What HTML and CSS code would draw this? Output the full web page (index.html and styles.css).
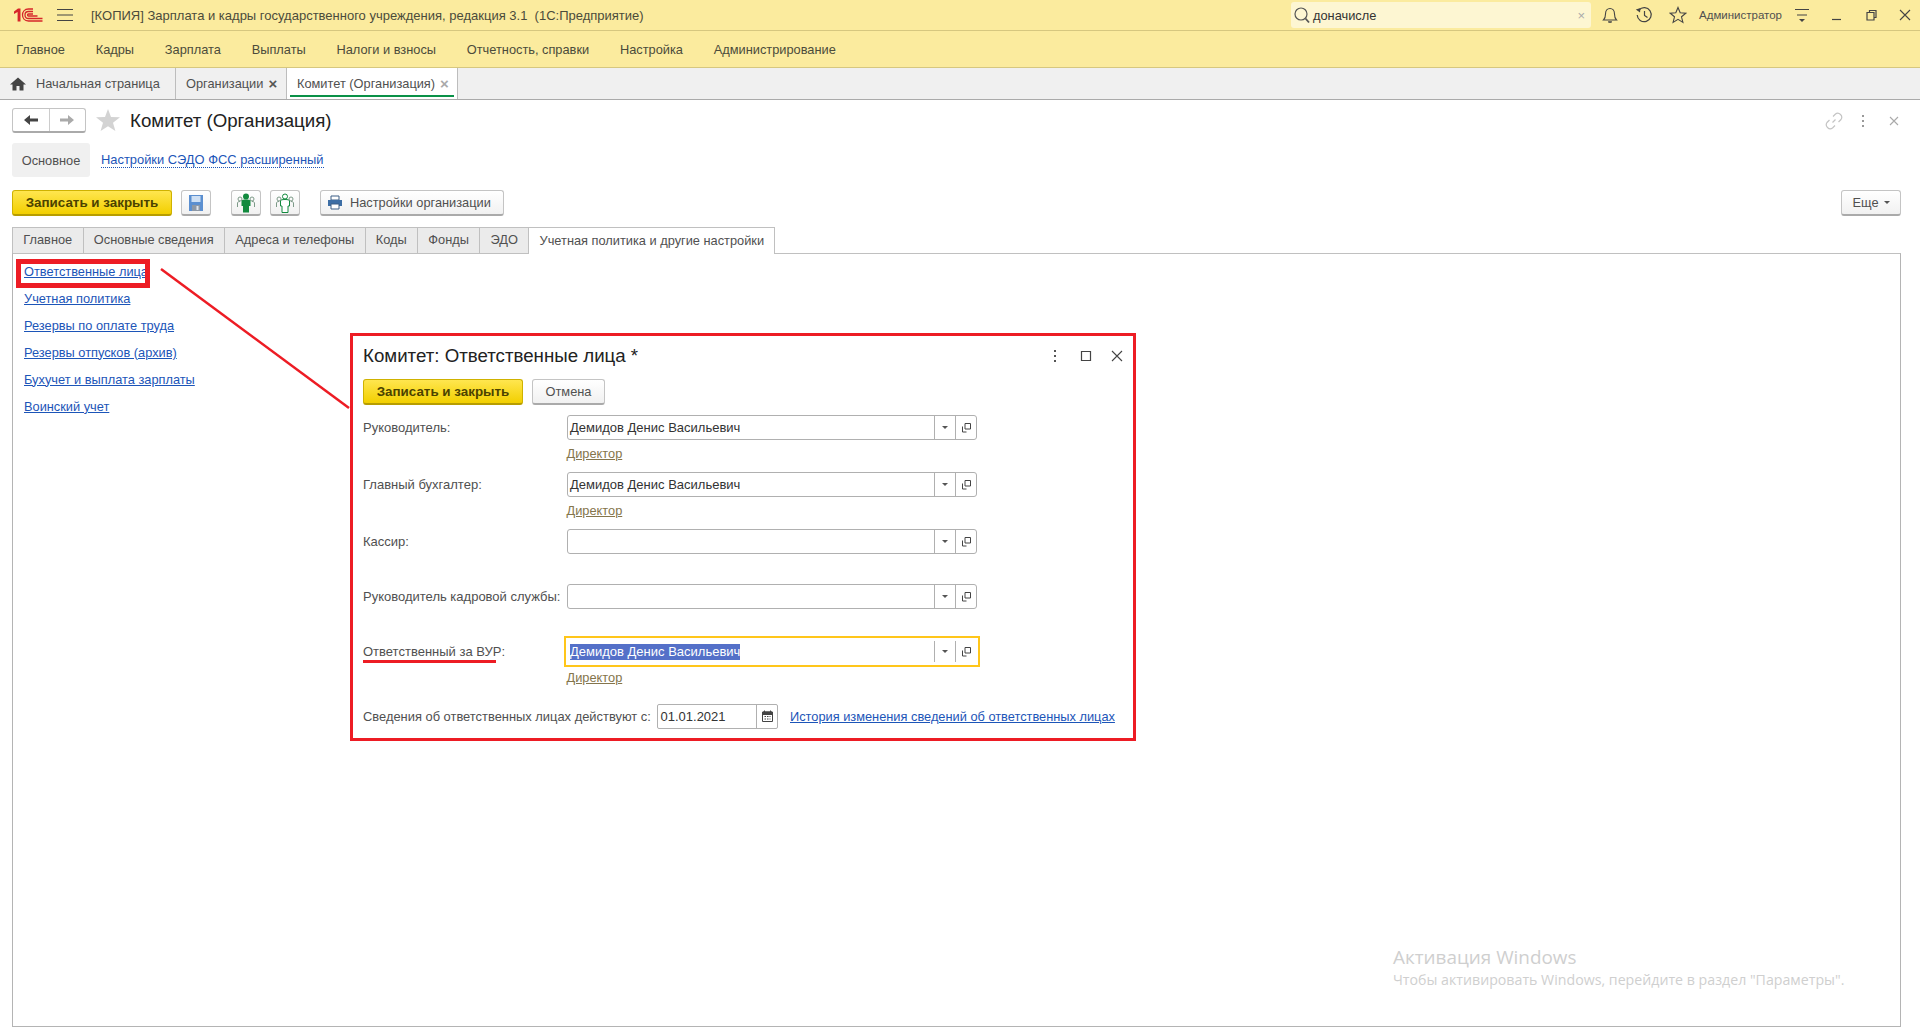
FILE: index.html
```html
<!DOCTYPE html>
<html lang="ru">
<head>
    <meta charset="UTF-8">
    <title>Комитет (Организация)</title>
    <link rel="stylesheet" href="styles.css">
</head>
<body>
<div class="titlebar">
    <svg class="logo" width="30" height="14" viewBox="0 0 30 14">
        <path d="M1 3.500 5 .5H7.500V13.500H4.600V4L1 6Z" fill="#d6262a"/>
        <g fill="none" stroke="#d6262a" stroke-width="1.300">
            <path d="M29.500 13H15.500C11.500 13 9.500 10 9.500 7S11.500 1 15.500 1H20"/>
            <path d="M29.500 10.500H15.500C13.500 10.500 12 9 12 7S13.500 3.500 15.500 3.500H20"/>
            <path d="M24.500 8H15.500C15 8 14.500 7.500 14.500 7S15 6 15.500 6H20"/>
        </g>
    </svg>
    <svg class="burger" width="18" height="14" viewBox="0 0 18 14"><path d="M1 1.500H17M1 7H17M1 12.500H17" stroke="#444" stroke-width="1.200"/></svg>
    <div class="app-title">[КОПИЯ] Зарплата и кадры государственного учреждения, редакция 3.1&nbsp; (1С:Предприятие)</div>
    <div class="search">
        <svg width="18" height="18" viewBox="0 0 18 18"><circle cx="8" cy="8" r="6" fill="none" stroke="#555" stroke-width="1.200"/><path d="M12.500 12.500 16 16.500" stroke="#555" stroke-width="1.800"/></svg>
        <span class="search-text">доначисле</span>
        <span class="search-clear">×</span>
    </div>
    <svg class="top-icon bell" width="18" height="18" viewBox="0 0 18 18"><path d="M2.500 14H15.500C14 12.500 13.500 11 13.500 8C13.500 4.500 11.500 2.500 9 2.500S4.500 4.500 4.500 8C4.500 11 4 12.500 2.500 14ZM7 16H11" fill="none" stroke="#444" stroke-width="1.100"/><path d="M7 15.500H11L9 17Z" fill="#444"/></svg>
    <svg class="top-icon" width="18" height="18" viewBox="0 0 18 18"><path d="M4 4A7 7 0 1 1 2.200 9" fill="none" stroke="#444" stroke-width="1.200"/><path d="M9.500 5V9.500L12.500 11.500" fill="none" stroke="#444" stroke-width="1.200"/><path d="M.8 3.500 5.500 2 5 6.500Z" fill="#444"/></svg>
    <svg class="top-icon" width="18" height="18" viewBox="0 0 18 18"><path d="M9 1.500 11.200 6.800 16.800 7.200 12.500 10.800 13.900 16.400 9 13.400 4.100 16.400 5.500 10.800 1.200 7.200 6.800 6.800Z" fill="none" stroke="#444" stroke-width="1.100"/></svg>
    <span class="user">Администратор</span>
    <svg class="user-menu" width="18" height="16" viewBox="0 0 18 16"><path d="M2 2.500H16M4 8H14" stroke="#444" stroke-width="1.100"/><path d="M6 12H12L9 15Z" fill="#444"/></svg>
    <svg class="win-btn win-min" width="14" height="14" viewBox="0 0 14 14"><path d="M2 11.500H11" stroke="#444" stroke-width="1.200"/></svg>
    <svg class="win-btn" width="14" height="14" viewBox="0 0 14 14"><path d="M5.500 4.500V2.500H12V9.500H10.500M3 4.500H10V12H3Z" fill="none" stroke="#444" stroke-width="1.200"/></svg>
    <svg class="win-btn" width="14" height="14" viewBox="0 0 14 14"><path d="M2 2 12 12M12 2 2 12" stroke="#444" stroke-width="1.100"/></svg>
</div>

<nav class="mainmenu">
    <a>Главное</a>
    <a>Кадры</a>
    <a>Зарплата</a>
    <a>Выплаты</a>
    <a>Налоги и взносы</a>
    <a>Отчетность, справки</a>
    <a>Настройка</a>
    <a>Администрирование</a>
</nav>

<div class="opened">
    <div class="opened-tab home-tab">
        <svg width="16" height="14" viewBox="0 0 16 14"><path d="M8 .5 16 7.500H13.500V13.500H9.500V9H6.500V13.500H2.500V7.500H0Z" fill="#444"/></svg>
        Начальная страница
    </div>
    <div class="opened-tab org-tab">Организации <span class="tab-x">×</span></div>
    <div class="opened-tab current-tab">Комитет (Организация) <span class="tab-x light">×</span></div>
</div>

<main class="page">
    <div class="page-head">
        <div class="nav-btns">
            <span class="nav-btn"><svg width="16" height="12" viewBox="0 0 16 12"><path d="M1 6 7 1V4.500H15V7.500H7V11Z" fill="#444"/></svg></span>
            <span class="nav-btn"><svg width="16" height="12" viewBox="0 0 16 12"><path d="M15 6 9 1V4.500H1V7.500H9V11Z" fill="#aaa"/></svg></span>
        </div>
        <svg class="fav" width="24" height="22" viewBox="0 0 24 22"><path d="M12 0 15 8 24 8.300 17 13.800 19.400 22 12 17.300 4.600 22 7 13.800 0 8.300 9 8Z" fill="#d3d3d3"/></svg>
        <h1>Комитет (Организация)</h1>
        <div class="page-icons">
            <svg width="18" height="18" viewBox="0 0 18 18"><path d="M7.500 10.500 10.500 7.500M8 4.500 10.500 2C12 .8 14 1 15.500 2.500S17 6 16 7.500L13.500 10M10 13.500 7.500 16C6 17.200 4 17 2.500 15.500S1 12 2 10.500L4.500 8" fill="none" stroke="#c4c4c4" stroke-width="1.200"/></svg>
            <svg class="dots" width="4" height="14" viewBox="0 0 4 14"><path d="M2 1V3M2 6V8M2 11V13" stroke="#999" stroke-width="2"/></svg>
            <svg width="10" height="10" viewBox="0 0 10 10"><path d="M1 1 9 9M9 1 1 9" stroke="#aaa" stroke-width="1.100"/></svg>
        </div>
    </div>

    <div class="sections">
        <span class="section-main">Основное</span>
        <a class="section-link">Настройки СЭДО ФСС расширенный</a>
    </div>

    <div class="toolbar">
        <button class="btn btn-primary">Записать и закрыть</button>
        <button class="btn btn-icon save-btn">
            <svg width="16" height="18" viewBox="0 0 16 18"><path d="M1 1H15V17H1Z" fill="#5b8fd0"/><path d="M3.500 2H12.500V8H3.500Z" fill="#cfe0f4"/><path d="M4 11H12V17H4Z" fill="#8d98a6"/><path d="M8.500 12H10.500V16H8.500Z" fill="#dfe5ec"/></svg>
        </button>
        <button class="btn btn-icon people-btn">
            <svg width="20" height="20" viewBox="0 0 20 20"><g fill="none" stroke="#7d9a88"><circle cx="4" cy="6" r="2"/><circle cx="16" cy="6" r="2"/><path d="M1.500 14V10C1.500 9 2.500 8.500 4 8.500M18.500 14V10C18.500 9 17.500 8.500 16 8.500"/></g><circle cx="10" cy="3.500" r="3" fill="#128a3e"/><path d="M5.500 8C5.500 7 7 6.500 10 6.500S14.500 7 14.500 8V13H13V19.500H7V13H5.500Z" fill="#128a3e"/></svg>
        </button>
        <button class="btn btn-icon people-btn2">
            <svg width="20" height="20" viewBox="0 0 20 20"><g fill="none" stroke="#7d9a88"><circle cx="4" cy="6" r="2"/><circle cx="16" cy="6" r="2"/><path d="M1.500 14V10C1.500 9 2.500 8.500 4 8.500M18.500 14V10C18.500 9 17.500 8.500 16 8.500"/></g><g fill="#fff" stroke="#128a3e"><circle cx="10" cy="3.500" r="2.500"/><path d="M5.500 8C5.500 7 7 6.500 10 6.500S14.500 7 14.500 8V13H13V19.500H7V13H5.500Z"/></g></svg>
        </button>
        <button class="btn settings-btn">
            <svg width="16" height="15" viewBox="0 0 16 15"><path d="M4 1H12V5H4Z" fill="#fff" stroke="#3d5f86"/><path d="M1 5H15V11H1Z" fill="#3d6ea5"/><path d="M4 9H12V14H4Z" fill="#fff" stroke="#3d5f86"/></svg>
            Настройки организации
        </button>
        <button class="btn more-btn">Еще <i class="caret"></i></button>
    </div>

    <div class="tabs">
        <div class="tab">Главное</div>
        <div class="tab">Основные сведения</div>
        <div class="tab">Адреса и телефоны</div>
        <div class="tab">Коды</div>
        <div class="tab">Фонды</div>
        <div class="tab">ЭДО</div>
        <div class="tab active">Учетная политика и другие настройки</div>
    </div>
    <div class="tab-body">
        <a class="side-link">Ответственные лица</a>
        <a class="side-link">Учетная политика</a>
        <a class="side-link">Резервы по оплате труда</a>
        <a class="side-link">Резервы отпусков (архив)</a>
        <a class="side-link">Бухучет и выплата зарплаты</a>
        <a class="side-link">Воинский учет</a>
    </div>
</main>

<div class="red-box"></div>
<svg class="red-line" width="200" height="150" viewBox="0 0 200 150"><path d="M1 1 189 140" stroke="#ed1c24" stroke-width="2.500"/></svg>

<section class="dialog">
    <div class="dialog-head">
        <h2>Комитет: Ответственные лица *</h2>
        <svg width="4" height="14" viewBox="0 0 4 14"><path d="M2 1V3M2 6V8M2 11V13" stroke="#555" stroke-width="2"/></svg>
        <svg class="dlg-max" width="12" height="12" viewBox="0 0 12 12"><path d="M1.500 1.500H10.500V10.500H1.500Z" fill="none" stroke="#444" stroke-width="1.200"/></svg>
        <svg class="dlg-close" width="12" height="12" viewBox="0 0 12 12"><path d="M1 1 11 11M11 1 1 11" stroke="#444" stroke-width="1.100"/></svg>
    </div>
    <div class="dialog-actions">
        <button class="btn btn-primary">Записать и закрыть</button>
        <button class="btn cancel-btn">Отмена</button>
    </div>

    <div class="form-row">
        <label>Руководитель:</label>
        <div class="field"><span class="field-value">Демидов Денис Васильевич</span><span class="field-btn"><i class="caret"></i></span><span class="field-btn"><svg width="10" height="10" viewBox="0 0 10 10"><path d="M4 .5H9.500V6H4ZM1.500 3.500V9H5.500" fill="none" stroke="#444"/></svg></span></div>
    </div>
    <div class="hint"><a>Директор</a></div>

    <div class="form-row">
        <label>Главный бухгалтер:</label>
        <div class="field"><span class="field-value">Демидов Денис Васильевич</span><span class="field-btn"><i class="caret"></i></span><span class="field-btn"><svg width="10" height="10" viewBox="0 0 10 10"><path d="M4 .5H9.500V6H4ZM1.500 3.500V9H5.500" fill="none" stroke="#444"/></svg></span></div>
    </div>
    <div class="hint"><a>Директор</a></div>

    <div class="form-row row-gap">
        <label>Кассир:</label>
        <div class="field"><span class="field-value"></span><span class="field-btn"><i class="caret"></i></span><span class="field-btn"><svg width="10" height="10" viewBox="0 0 10 10"><path d="M4 .5H9.500V6H4ZM1.500 3.500V9H5.500" fill="none" stroke="#444"/></svg></span></div>
    </div>

    <div class="form-row row-gap">
        <label>Руководитель кадровой службы:</label>
        <div class="field"><span class="field-value"></span><span class="field-btn"><i class="caret"></i></span><span class="field-btn"><svg width="10" height="10" viewBox="0 0 10 10"><path d="M4 .5H9.500V6H4ZM1.500 3.500V9H5.500" fill="none" stroke="#444"/></svg></span></div>
    </div>

    <div class="form-row">
        <label><span class="marked">Ответственный за ВУР</span>:</label>
        <div class="field focused"><span class="field-value"><span class="selected">Демидов Денис Васильевич</span></span><span class="field-btn"><i class="caret"></i></span><span class="field-btn"><svg width="10" height="10" viewBox="0 0 10 10"><path d="M4 .5H9.500V6H4ZM1.500 3.500V9H5.500" fill="none" stroke="#444"/></svg></span></div>
    </div>
    <div class="hint hint-last"><a>Директор</a></div>

    <div class="date-row">
        <label>Сведения об ответственных лицах действуют с:</label>
        <div class="field date-field"><span class="field-value">01.01.2021</span><span class="field-btn"><svg width="11" height="12" viewBox="0 0 11 12"><path d="M.5 2H10.500V11.500H.5Z" fill="none" stroke="#444"/><path d="M1 2H10V4.500H1ZM2.500 .5V2M8.500 .5V2" fill="#444" stroke="#444"/><path d="M2.500 6.500H8.500M2.500 9H8.500" stroke="#444" stroke-dasharray="1.500 1"/></svg></span></div>
        <a class="history">История изменения сведений об ответственных лицах</a>
    </div>
</section>

<div class="activation">
    <div class="activation-title">Активация Windows</div>
    <div class="activation-text">Чтобы активировать Windows, перейдите в раздел "Параметры".</div>
</div>
</body>
</html>
```

FILE: styles.css
```css
* {
    margin: 0;
    padding: 0;
    box-sizing: border-box;
}
html, body {
    height: 1034px;
    overflow: hidden;
}
body {
    display: flex;
    flex-direction: column;
    position: relative;
    font-family: "Liberation Sans", Arial, sans-serif;
    font-size: 12.800px;
    color: #505050;
    background: #fff;
}
svg {
    display: block;
    flex: none;
}

/* top bars */
.titlebar {
    display: flex;
    align-items: center;
    height: 31px;
    padding-right: 8px;
    background: #fbeb9e;
    border-bottom: 1px solid #d6c77f;
}
.logo {
    margin-left: 13px;
}
.burger {
    margin-left: 13px;
}
.app-title {
    flex: 1;
    margin-left: 17px;
    font-size: 13px;
    color: #4b4b3b;
    white-space: nowrap;
}
.search {
    display: flex;
    align-items: center;
    width: 300px;
    height: 26px;
    padding: 0 6px 0 2px;
    background: #fdf6d2;
    border-radius: 3px;
    color: #333;
}
.search-text {
    flex: 1;
    margin-left: 2px;
}
.search-clear {
    color: #aaa;
    font-size: 13px;
}
.top-icon {
    margin-left: 16px;
}
.bell {
    margin-left: 10px;
}
.user {
    margin-left: 12px;
    width: 90px;
    font-size: 11.500px;
    white-space: nowrap;
}
.user-menu {
    margin-left: 4px;
}
.win-btn {
    margin-left: 20px;
}
.win-min {
    margin-left: 19px;
}
.mainmenu {
    display: flex;
    align-items: center;
    height: 37px;
    padding-left: 16px;
    gap: 30.800px;
    background: #fbeb9e;
    border-bottom: 1px solid #d6c77f;
    color: #4b4b3b;
}
.opened {
    display: flex;
    height: 32px;
    background: #f0f0f0;
    border-bottom: 1px solid #aaa;
}
.opened-tab {
    display: flex;
    align-items: center;
    position: relative;
    border-right: 1px solid #bdbdbd;
    white-space: nowrap;
}
.home-tab {
    width: 176px;
    padding-left: 10px;
    gap: 10px;
}
.org-tab {
    width: 111px;
    padding-left: 10px;
    gap: 5px;
}
.current-tab {
    width: 171px;
    padding-left: 10px;
    gap: 5px;
    background: #fff;
}
.current-tab::after {
    content: "";
    position: absolute;
    left: 3px;
    right: 3px;
    bottom: 2px;
    height: 2px;
    background: #0a9148;
}
.tab-x {
    font-size: 15px;
    font-weight: bold;
    color: #555;
}
.tab-x.light {
    color: #aaa;
}

/* page */
.page {
    flex: 1;
    display: flex;
    flex-direction: column;
    padding: 8px 19px 7px 12px;
}
.page-head {
    display: flex;
    align-items: center;
    height: 25px;
}
.nav-btns {
    display: flex;
    width: 74px;
    height: 25px;
    border: 1px solid #c4c4c4;
    border-bottom: 2px solid #aaa;
    border-radius: 3px;
}
.nav-btn {
    flex: 1;
    display: flex;
    align-items: center;
    justify-content: center;
}
.nav-btn + .nav-btn {
    border-left: 1px solid #ccc;
}
.fav {
    margin: -2px 0 0 10px;
}
h1 {
    margin-left: 10px;
    font-size: 18.700px;
    font-weight: normal;
    color: #222;
}
.page-icons {
    display: flex;
    align-items: center;
    margin-left: auto;
    margin-right: 2px;
    gap: 21px;
}
.dots {
    margin: 0 3px 0 -3px;
}
.sections {
    display: flex;
    align-items: center;
    margin-top: 10px;
    height: 34px;
}
.section-main {
    display: flex;
    align-items: center;
    justify-content: center;
    width: 78px;
    height: 34px;
    background: #f0f0f0;
    border-radius: 3px;
}
.section-link {
    margin-left: 11px;
    font-size: 12.900px;
    color: #1c55b8;
    border-bottom: 1px dotted #1c55b8;
}
.toolbar {
    display: flex;
    margin-top: 13px;
    height: 26px;
}
.btn {
    display: flex;
    align-items: center;
    justify-content: center;
    height: 26px;
    font: inherit;
    color: #505050;
    background: linear-gradient(#fff, #f1f1f1);
    border: 1px solid #c4c4c4;
    border-bottom: 2px solid #aaa;
    border-radius: 3px;
}
.btn-primary {
    width: 160px;
    font-weight: bold;
    font-size: 13.400px;
    color: #4b4200;
    background: linear-gradient(#ffe64f, #f2cf00);
    border-color: #cfb200;
    border-bottom-color: #b79d00;
}
.btn-icon {
    width: 30px;
}
.save-btn {
    margin-left: 9px;
}
.people-btn {
    margin-left: 20px;
}
.people-btn2 {
    margin-left: 9px;
}
.settings-btn {
    width: 184px;
    margin-left: 20px;
    padding-left: 6px;
    justify-content: flex-start;
    gap: 7px;
}
.more-btn {
    width: 60px;
    margin-left: auto;
    gap: 5px;
}
.caret {
    width: 0;
    height: 0;
    border-left: 3px solid transparent;
    border-right: 3px solid transparent;
    border-top: 3px solid #555;
}
.tabs {
    display: flex;
    margin-top: 11px;
    height: 27px;
}
.tab {
    display: flex;
    align-items: center;
    padding: 0 10.300px 2px;
    background: #ebebeb;
    border: 1px solid #c0c0c0;
    border-left: 0;
    white-space: nowrap;
}
.tab:first-child {
    border-left: 1px solid #c0c0c0;
}
.tab.active {
    background: #fff;
    border-bottom: 0;
    position: relative;
    z-index: 1;
}
.tab-body {
    flex: 1;
    display: flex;
    flex-direction: column;
    align-items: flex-start;
    margin-top: -1px;
    padding: 3.500px 0 0 11px;
    border: 1px solid #b4b4b4;
    border-top-color: #c0c0c0;
}
.side-link {
    height: 27px;
    line-height: 27px;
    color: #1c55b8;
    text-decoration: underline;
}

/* annotations */
.red-box {
    position: absolute;
    left: 16px;
    top: 259px;
    width: 134px;
    height: 29px;
    border: 5px solid #ed1c24;
}
.red-line {
    position: absolute;
    left: 160px;
    top: 268px;
}

/* dialog */
.dialog {
    position: absolute;
    left: 350px;
    top: 333px;
    width: 786px;
    height: 408px;
    padding: 0 2px 0 10px;
    background: #fff;
    border: 3px solid #ed1c24;
}
.dialog-head {
    display: flex;
    align-items: center;
    height: 39px;
    padding-right: 8.500px;
}
h2 {
    flex: 1;
    font-size: 18.700px;
    font-weight: normal;
    color: #222;
}
.dlg-max {
    margin-left: 23px;
}
.dlg-close {
    margin-left: 19px;
}
.dialog-actions {
    display: flex;
    gap: 9px;
    margin: 4px 0 10px;
}
.cancel-btn {
    width: 73px;
}
.form-row {
    display: flex;
    align-items: center;
    height: 25px;
    font-size: 13px;
}
.form-row label {
    width: 203.500px;
    flex: none;
    white-space: nowrap;
}
.row-gap {
    margin-bottom: 30px;
}
.field {
    display: flex;
    width: 410px;
    height: 25px;
    background: #fff;
    border: 1px solid #b0b0b0;
    border-radius: 3px;
}
.field-value {
    flex: 1;
    display: flex;
    align-items: center;
    padding-left: 2.500px;
    font-size: 13px;
    color: #333;
}
.field-btn {
    display: flex;
    align-items: center;
    justify-content: center;
    width: 21px;
    border-left: 1px solid #b0b0b0;
}
.focused {
    border-color: transparent;
    outline: 2px solid #ffc61a;
    outline-offset: 1px;
    border-radius: 0;
}
.focused .field-btn {
    margin: 1px 0;
}
.selected {
    background: #5470c8;
    color: #fff;
    line-height: 16px;
}
.marked {
    position: relative;
}
.marked::after {
    content: "";
    position: absolute;
    left: 0;
    width: 133px;
    bottom: -4px;
    height: 3px;
    background: #ed1c24;
}
.hint {
    height: 32px;
    line-height: 28px;
    padding-left: 203.500px;
}
.hint-last {
    height: 39.500px;
}
.hint a {
    color: #84754c;
    text-decoration: underline;
}
.date-row {
    display: flex;
    align-items: center;
    height: 25px;
}
.date-row label {
    width: 294px;
    font-size: 12.900px;
    white-space: nowrap;
}
.date-field {
    width: 121px;
    border-radius: 2px;
}
.history {
    margin-left: 12px;
    color: #1c55b8;
    text-decoration: underline;
    white-space: nowrap;
}

/* windows watermark */
.activation {
    position: absolute;
    left: 1393px;
    top: 945px;
    color: #cfcfcf;
    font-family: "Open Sans", sans-serif;
}
.activation-title {
    font-size: 18.900px;
    line-height: 25px;
}
.activation-text {
    font-size: 14.200px;
    line-height: 20px;
    white-space: nowrap;
}
```
